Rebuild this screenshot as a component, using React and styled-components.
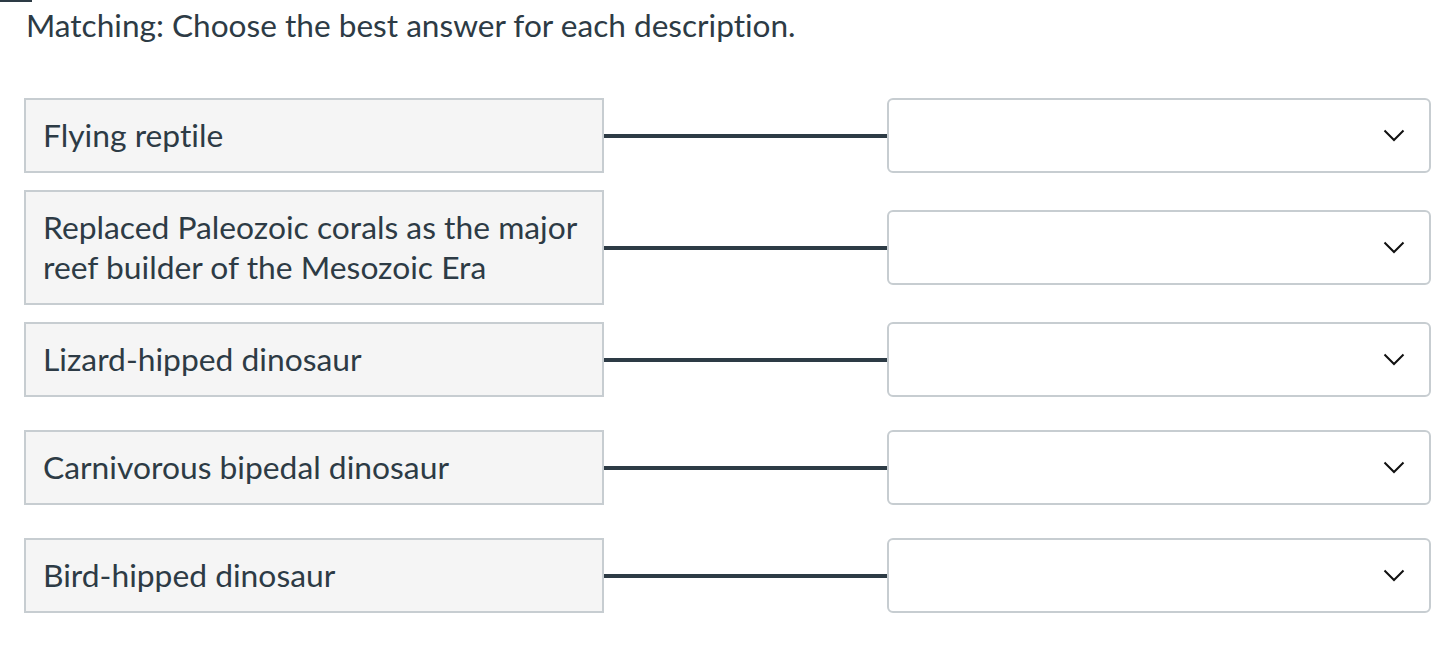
import React from "react";
import styled, { createGlobalStyle } from "styled-components";

const items = [
  { id: 1, text: "Flying reptile", gap: 17 },
  { id: 2, text: "Replaced Paleozoic corals as the major reef builder of the Mesozoic Era", gap: 17 },
  { id: 3, text: "Lizard-hipped dinosaur", gap: 33 },
  { id: 4, text: "Carnivorous bipedal dinosaur", gap: 33 },
  { id: 5, text: "Bird-hipped dinosaur", gap: 0 },
];

const Chevron = () => (
  <svg width="22" height="13" viewBox="0 0 22 13" fill="none">
    <path d="M1.5 1.5l9.5 9.5 9.5-9.5" stroke="#111" strokeWidth="2" />
  </svg>
);

export const App = () => {
  return (
    <>
      <GlobalStyle />
      <Page>
        <FocusMark />
        <Heading>Matching: Choose the best answer for each description.</Heading>
        <List>
          {items.map((item) => (
            <Row key={item.id} gap={item.gap}>
              <Prompt>{item.text}</Prompt>
              <Connector />
              <Select>
                <Chevron />
              </Select>
            </Row>
          ))}
        </List>
      </Page>
    </>
  );
};

export default App;

const GlobalStyle = createGlobalStyle`
  body {
    margin: 0;
    background: #ffffff;
    font-family: Lato, "Open Sans", sans-serif;
    color: #2d3b45;
    font-variant-ligatures: none;
  }
`;

const Page = styled.div`
  position: relative;
  padding: 0 0 0 24px;
`;

const FocusMark = styled.div`
  position: absolute;
  left: 0;
  top: 0;
  width: 32px;
  height: 2px;
  background: #2d3b45;
`;

const Heading = styled.div`
  font-size: 31.6px;
  line-height: 38px;
  padding: 6px 0 0 2px;
  margin-bottom: 54px;
`;

const List = styled.div`
  display: flex;
  flex-direction: column;
`;

const Row = styled.div`
  display: grid;
  grid-template-columns: 580px 283px 544px;
  align-items: center;
  margin-bottom: ${(props) => props.gap}px;
`;

const Prompt = styled.div`
  box-sizing: border-box;
  width: 580px;
  background: #f5f5f5;
  border: 2px solid #c7cdd1;
  padding: 15px 17px 16px 17px;
  font-size: 31.8px;
  line-height: 40px;
`;

const Connector = styled.div`
  height: 4px;
  background: #2d3b45;
`;

const Select = styled.div`
  box-sizing: border-box;
  height: 75px;
  border: 2px solid #c7cdd1;
  border-radius: 6px;
  background: #fff;
  display: flex;
  align-items: center;
  justify-content: flex-end;
  padding-right: 24px;
`;
